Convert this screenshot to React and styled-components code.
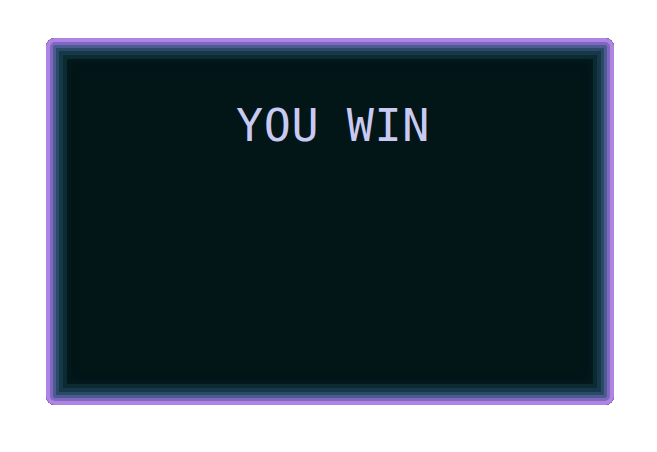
import React from 'react';
import styled, { createGlobalStyle } from 'styled-components';

const GlobalStyle = createGlobalStyle`
    html, body {
        margin: 0;
        padding: 0;
        background: #ffffff;
    }
    body {
        font-family: "DejaVu Sans Mono", monospace;
    }
`;

function App() {
    return (
        <>
            <GlobalStyle />
            <Page>
                <Frame>
                    <Title>YOU WIN</Title>
                </Frame>
            </Page>
        </>
    );
}

export default App;

const Page = styled.div`
    width: 657px;
    height: 452px;
    padding: 38px 43px 47px 46px;
    box-sizing: border-box;
    display: flex;
`;

const Frame = styled.div`
    flex: 1;
    display: flex;
    flex-direction: column;
    align-items: center;
    background-color: #021517;
    border-radius: 9px;
    box-shadow:
        inset 0 0 0 4px #b084e4,
        inset 0 0 0 7px #7e68c0,
        inset 0 0 0 10px #4c5c92,
        inset 0 0 0 13px #2a4a68,
        inset 0 0 0 17px #173848,
        inset 0 0 0 21px #0c2a32,
        inset 0 0 8px 23px #041c20;
`;

const Title = styled.h1`
    margin: 65px 0 0 6px;
    font-family: "DejaVu Sans Mono", "Liberation Mono", monospace;
    font-weight: normal;
    font-size: 45px;
    line-height: 1;
    letter-spacing: 0.6px;
    color: #c9caf2;
`;
